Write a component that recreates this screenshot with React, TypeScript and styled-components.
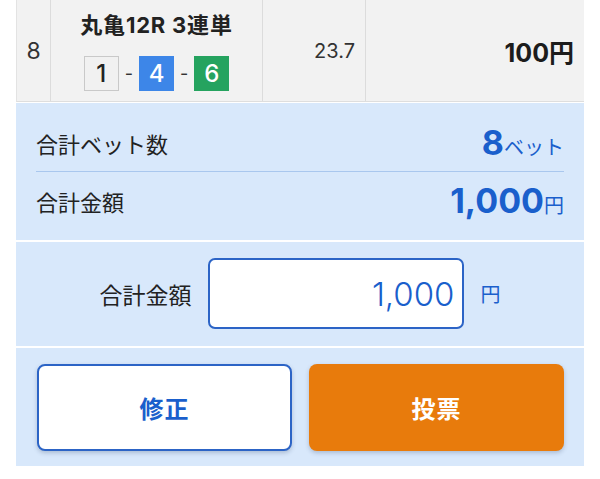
import React from "react";
import styled, { createGlobalStyle, css } from "styled-components";

const FONT = `Inter, "Noto Sans CJK JP", sans-serif`;

const Global = createGlobalStyle`
  *, *::before, *::after { box-sizing: border-box; }
  html, body { margin: 0; padding: 0; background: #ffffff; }
  body {
    font-family: ${FONT};
    color: #222222;
  }
`;

const Page = styled.div`
  width: 600px;
  padding: 0 16px;
`;

const TableRow = styled.div`
  display: grid;
  grid-template-columns: 34px 212px 103px 1fr;
  height: 102px;
  background: #f2f2f2;
  border-left: 1px solid #e3e3e3;
  border-bottom: 1px solid #dedede;
`;

const Cell = styled.div<{ $align?: "center" | "right" }>`
  display: flex;
  align-items: center;
  justify-content: ${(p) => (p.$align === "right" ? "flex-end" : "center")};
  padding: 0 10px;
  border-right: 1px solid #dcdcdc;
  &:last-child { border-right: none; }
`;

const IndexCell = styled(Cell)`
  padding: 0;
  font-size: 23px;
  color: #333333;
`;

const BetCell = styled(Cell)`
  flex-direction: column;
  justify-content: flex-start;
  padding: 9px 0 0;
  gap: 15px;
`;

const RaceTitle = styled.div`
  font-size: 22px;
  font-weight: 700;
  letter-spacing: 0.8px;
  line-height: 32px;
  color: #222222;
`;

const Combo = styled.div`
  display: flex;
  align-items: center;
  gap: 6px;
`;

const boxColors = {
  white: css`
    background: #f1f1f1;
    border: 1px solid #c9c9c9;
    color: #222222;
  `,
  blue: css`
    background: #3d86e8;
    border: 1px solid #3d86e8;
    color: #ffffff;
  `,
  green: css`
    background: #25a35f;
    border: 1px solid #25a35f;
    color: #ffffff;
  `,
};

const NumBox = styled.span<{ $variant: keyof typeof boxColors }>`
  display: inline-flex;
  align-items: center;
  justify-content: center;
  width: 35px;
  height: 35px;
  font-size: 24px;
  font-weight: 500;
  ${(p) => boxColors[p.$variant]}
`;

const Dash = styled.span`
  font-size: 18px;
  color: #333333;
`;

const OddsCell = styled(Cell)`
  font-size: 20px;
  color: #333333;
`;

const AmountCell = styled(Cell)`
  font-size: 25px;
  font-weight: 700;
  color: #1c1c1c;
`;

const Panel = styled.div`
  margin-top: 1px;
  display: flex;
  flex-direction: column;
  gap: 2px;
  background: #ffffff;
`;

const Section = styled.div`
  background: #d8e8fb;
`;

const SummarySection = styled(Section)`
  padding: 11px 20px 10px;
`;

const SummaryRow = styled.div<{ $divider?: boolean }>`
  display: flex;
  align-items: center;
  justify-content: space-between;
  height: 58px;
  ${(p) => p.$divider && css`border-bottom: 1px solid #a9c7ee;`}
`;

const Label = styled.span<{ $size?: number }>`
  font-size: ${(p) => p.$size ?? 22}px;
  color: #222222;
`;

const Value = styled.span`
  display: flex;
  align-items: baseline;
  color: #1a5fcc;
`;

const Big = styled.span`
  font-size: 34px;
  font-weight: 700;
  line-height: 1;
`;

const Unit = styled.span`
  font-size: 20px;
  line-height: 1;
`;

const InputSection = styled(Section)`
  height: 104px;
  padding: 16px 0 17px;
  display: flex;
  align-items: center;
  justify-content: center;
  gap: 16px;
`;

const AmountInput = styled.input`
  width: 256px;
  height: 71px;
  border: 2px solid #2c64c6;
  border-radius: 7px;
  background: #ffffff;
  padding: 0 7px 0 10px;
  text-align: right;
  font-family: ${FONT};
  font-size: 33px;
  font-weight: 300;
  color: #1a5fcc;
  outline: none;
`;

const InputUnit = styled.span`
  font-size: 20px;
  color: #1a5fcc;
  margin-left: 1px;
`;

const ButtonSection = styled(Section)`
  padding: 16px 20px 15px 21px;
  display: grid;
  grid-template-columns: 1fr 1fr;
  gap: 17px;
`;

const ActionButton = styled.button<{ $primary?: boolean }>`
  height: 87px;
  border-radius: 8px;
  font-family: ${FONT};
  font-size: 24px;
  font-weight: 700;
  letter-spacing: 1px;
  cursor: pointer;
  box-shadow: 0 2px 4px rgba(40, 60, 100, 0.25);
  ${(p) =>
    p.$primary
      ? css`
          background: #e87b0c;
          border: none;
          color: #ffffff;
        `
      : css`
          background: #ffffff;
          border: 2px solid #2c64c6;
          color: #1a5fcc;
        `}
`;

export default function App() {
  return (
    <>
      <Global />
      <Page>
        <TableRow>
          <IndexCell>8</IndexCell>
          <BetCell>
            <RaceTitle>丸亀12R 3連単</RaceTitle>
            <Combo>
              <NumBox $variant="white">1</NumBox>
              <Dash>-</Dash>
              <NumBox $variant="blue">4</NumBox>
              <Dash>-</Dash>
              <NumBox $variant="green">6</NumBox>
            </Combo>
          </BetCell>
          <OddsCell $align="right">23.7</OddsCell>
          <AmountCell $align="right">100円</AmountCell>
        </TableRow>
        <Panel>
          <SummarySection>
            <SummaryRow $divider>
              <Label>合計ベット数</Label>
              <Value>
                <Big>8</Big>
                <Unit>ベット</Unit>
              </Value>
            </SummaryRow>
            <SummaryRow>
              <Label>合計金額</Label>
              <Value>
                <Big>1,000</Big>
                <Unit>円</Unit>
              </Value>
            </SummaryRow>
          </SummarySection>
          <InputSection>
            <Label $size={23}>合計金額</Label>
            <AmountInput type="text" defaultValue="1,000" readOnly />
            <InputUnit>円</InputUnit>
          </InputSection>
          <ButtonSection>
            <ActionButton type="button">修正</ActionButton>
            <ActionButton type="button" $primary>
              投票
            </ActionButton>
          </ButtonSection>
        </Panel>
      </Page>
    </>
  );
}
